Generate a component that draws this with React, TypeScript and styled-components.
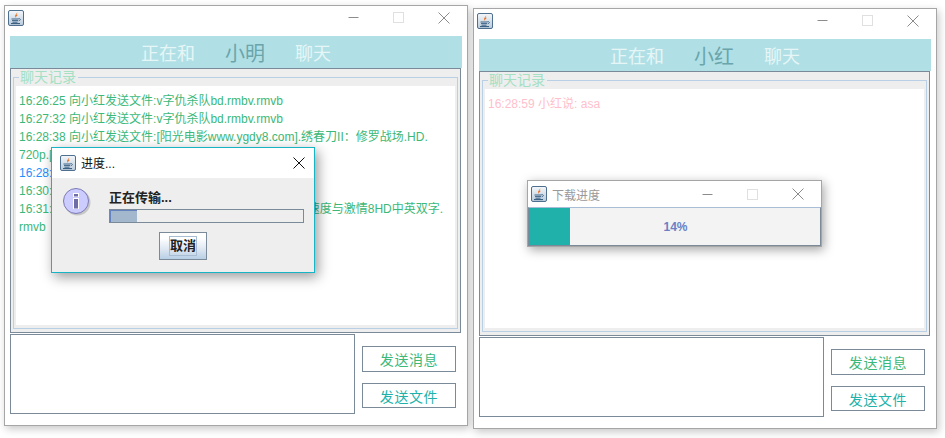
import React from 'react'
import styled, { createGlobalStyle } from 'styled-components'

const borderGrey = '#7a8a99'
const uiFont = '"Liberation Sans", "Noto Sans CJK SC", sans-serif'

const GlobalStyle = createGlobalStyle`
  html, body {
    margin: 0;
    padding: 0;
    background: #ffffff;
    font-family: ${uiFont};
  }
`

const Desktop = styled.div`
  position: relative;
  width: 945px;
  height: 438px;
  overflow: hidden;
  background: #ffffff;
`

const ChatWindow = styled.div<{ $left: number; $top: number }>`
  position: absolute;
  left: ${({ $left }) => $left}px;
  top: ${({ $top }) => $top}px;
  width: 464px;
  height: 421px;
  box-sizing: border-box;
  border: 1px solid #a6a6a6;
  background: #ffffff;
  box-shadow: 2px 3px 8px rgba(0, 0, 0, 0.22);
`

const TitleBar = styled.div<{ $height: number; $bottom?: number; $left?: number }>`
  display: flex;
  align-items: center;
  box-sizing: border-box;
  height: ${({ $height }) => $height}px;
  padding: 0 0 ${({ $bottom }) => $bottom ?? 0}px ${({ $left }) => $left ?? 3}px;
  background: #ffffff;
`

const TitleText = styled.span<{ $color: string }>`
  margin-left: 5px;
  font-size: 12px;
  color: ${({ $color }) => $color};
`

const Controls = styled.div`
  display: flex;
  margin-left: auto;
`

const ControlCell = styled.div<{ $width: number }>`
  display: flex;
  align-items: center;
  justify-content: center;
  width: ${({ $width }) => $width}px;
`

const WindowBody = styled.div`
  padding: 0 5px;
`

const Banner = styled.div`
  display: flex;
  align-items: center;
  justify-content: center;
  gap: 30px;
  height: 32px;
  background: #b0e0e6;
`

const BannerText = styled.span`
  font-size: 18px;
  color: #e6f6f6;
`

const BannerName = styled.span`
  font-size: 20px;
  color: #6aa5ab;
`

const Panel = styled.div`
  box-sizing: border-box;
  width: 451px;
  height: 265px;
  padding: 0 2px 3px 2px;
  border: 1px solid ${borderGrey};
  background: #eeeeee;
`

const Group = styled.fieldset`
  box-sizing: border-box;
  height: 100%;
  min-width: 0;
  margin: 0;
  padding: 0 2px 3px 2px;
  border: 1px solid #b8cfe5;
`

const GroupTitle = styled.legend`
  margin-left: 3px;
  padding: 0 2px 0 1px;
  font-size: 14px;
  line-height: 17px;
  color: #a3e0c4;
`

const Log = styled.div`
  box-sizing: border-box;
  height: 239px;
  padding: 6px 3px;
  background: #ffffff;
`

const LogLine = styled.div<{ $color: string }>`
  height: 18px;
  font-size: 12px;
  line-height: 18px;
  white-space: nowrap;
  color: ${({ $color }) => $color};
`

const BottomRow = styled.div`
  display: flex;
  margin-top: 1px;
`

const MessageInput = styled.div`
  box-sizing: border-box;
  width: 345px;
  height: 80px;
  border: 1px solid ${borderGrey};
  background: #ffffff;
`

const ActionColumn = styled.div`
  display: flex;
  flex-direction: column;
  gap: 11px;
  width: 94px;
  margin-left: 7px;
  padding-top: 12px;
`

const ActionButton = styled.div<{ $color: string; $height: number }>`
  display: flex;
  align-items: center;
  justify-content: center;
  box-sizing: border-box;
  height: ${({ $height }) => $height}px;
  border: 1px solid ${borderGrey};
  font-size: 14px;
  letter-spacing: 0.6px;
  color: ${({ $color }) => $color};
  background: #ffffff;
`

const Dialog = styled.div`
  position: absolute;
  left: 51px;
  top: 147px;
  width: 264px;
  height: 126px;
  box-sizing: border-box;
  border: 1px solid #17b4c6;
  background: #eeeeee;
  box-shadow: 3px 4px 12px rgba(0, 0, 0, 0.4);
`

const DialogBody = styled.div`
  display: flex;
  flex-direction: column;
  padding: 10px 10px 0 11px;
`

const DialogMessage = styled.div`
  display: flex;
  gap: 16px;
`

const MessageColumn = styled.div`
  display: flex;
  flex-direction: column;
  padding-top: 2px;
`

const MessageText = styled.div`
  font-size: 13px;
  font-weight: 700;
  line-height: 16px;
  color: #222222;
`

const TransferBar = styled.div`
  box-sizing: border-box;
  width: 195px;
  height: 14px;
  margin-top: 3px;
  border: 1px solid ${borderGrey};
  background: #eeeeee;
`

const TransferFill = styled.div`
  height: 100%;
  background: #a3b8cc;
  border-top: 1px solid #6382bf;
  border-left: 1px solid #6382bf;
  box-sizing: border-box;
`

const CancelButton = styled.div`
  display: flex;
  align-items: center;
  justify-content: center;
  align-self: center;
  box-sizing: border-box;
  width: 48px;
  height: 28px;
  margin-top: 9px;
  margin-right: 1px;
  border: 1px solid ${borderGrey};
  background: linear-gradient(#ffffff 20%, #dfe8f2 60%, #b8cfe5);
`

const CancelLabel = styled.span`
  box-sizing: border-box;
  width: 28px;
  height: 20px;
  border: 1px solid #a9bdd2;
  font-size: 13px;
  font-weight: 700;
  line-height: 18px;
  text-align: center;
  color: #222222;
`

const DownloadWindow = styled.div`
  position: absolute;
  left: 527px;
  top: 180px;
  width: 295px;
  height: 67px;
  box-sizing: border-box;
  border: 1px solid #a6a6a6;
  background: #ffffff;
  box-shadow: 2px 3px 10px rgba(0, 0, 0, 0.35);
`

const DownloadBar = styled.div`
  position: relative;
  box-sizing: border-box;
  height: 39px;
  border: 1px solid ${borderGrey};
  border-top-color: #a9bdd6;
  background: #f3f3f3;
`

const DownloadFill = styled.div`
  height: 100%;
  background: #20b2aa;
`

const DownloadLabel = styled.span`
  position: absolute;
  inset: 0 0 0 2px;
  display: flex;
  align-items: center;
  justify-content: center;
  font-size: 12px;
  font-weight: 700;
  color: #6a80c4;
`

const JavaIcon: React.FC = () => (
  <svg width="16" height="16" viewBox="0 0 16 16" style={{ flex: 'none' }}>
    <defs>
      <linearGradient id="javaBg" x1="0" y1="0" x2="0" y2="1">
        <stop offset="0" stopColor="#f4f7fa" />
        <stop offset="1" stopColor="#b9cadb" />
      </linearGradient>
    </defs>
    <rect x="0.5" y="0.5" width="15" height="15" rx="1.5" fill="url(#javaBg)" stroke="#4f6f8f" />
    <path d="M9 1.8c.8 1.8-2.6 2.8-1.7 4.9.2.5.5.9.8 1.2-.8-1.5 1.3-2.1 1.7-3.5-.6.4-1 .6-1.4.7.7-.9 1-2.2.6-3.3z" fill="#e8701f" />
    <path d="M3.5 9h7M4 10.6h6M4.5 12.2h5" stroke="#3f6587" strokeWidth="1" fill="none" />
    <path d="M10.5 8.6c2.2-.3 2.6 1.7.2 2.2" stroke="#3f6587" strokeWidth="1" fill="none" />
    <path d="M3 13.6h9" stroke="#2f5577" strokeWidth="1" />
  </svg>
)

const InfoIcon: React.FC = () => (
  <svg width="30" height="30" viewBox="0 0 30 30" style={{ flex: 'none' }}>
    <circle cx="14.5" cy="14.5" r="13" fill="#000000" opacity="0.16" />
    <circle cx="13" cy="13" r="12.5" fill="#ccccff" stroke="#7b7bb5" />
    <rect x="10" y="5" width="6" height="4" fill="#ffffff" />
    <rect x="11" y="6" width="4" height="2.5" fill="#6e6ea6" />
    <rect x="10" y="10" width="6" height="11" fill="#ffffff" />
    <rect x="11" y="11" width="4" height="9.5" fill="#6e6ea6" />
  </svg>
)

const WindowControls: React.FC<{ closeOnly?: boolean }> = ({ closeOnly }) => (
  <Controls>
    {!closeOnly && (
      <>
        <ControlCell $width={45}>
          <svg width="11" height="11" viewBox="0 0 11 11">
            <path d="M0.5 5.5h10" stroke="#8c8c8c" />
          </svg>
        </ControlCell>
        <ControlCell $width={45}>
          <svg width="11" height="11" viewBox="0 0 11 11">
            <rect x="0.5" y="0.5" width="10" height="10" fill="none" stroke="#e0e0e0" />
          </svg>
        </ControlCell>
      </>
    )}
    <ControlCell $width={closeOnly ? 30 : 46}>
      <svg width="12" height="12" viewBox="0 0 12 12">
        <path d="M0.5 0.5l11 11M11.5 0.5l-11 11" stroke={closeOnly ? '#111111' : '#8c8c8c'} fill="none" />
      </svg>
    </ControlCell>
  </Controls>
)

type ChatEntry = { text: string; color: string }

const green = '#3cb878'
const blue = '#1e90ff'
const pink = '#ffc0cb'

const leftLog: ChatEntry[] = [
  { text: '16:26:25 向小红发送文件:v字仇杀队bd.rmbv.rmvb', color: green },
  { text: '16:27:32 向小红发送文件:v字仇杀队bd.rmbv.rmvb', color: green },
  { text: '16:28:38 向小红发送文件:[阳光电影www.ygdy8.com].绣春刀II：修罗战场.HD.', color: green },
  { text: '720p.[中英双字].rmvb', color: green },
  { text: '16:28:59 小红说: asa', color: blue },
  { text: '16:30:12 向小红发送文件:bd.rmvb', color: green },
  { text: '16:31:06 向小红发送文件:[阳光电影www.ygdy8.com]...速度与激情8HD中英双字.', color: green },
  { text: 'rmvb', color: green },
]

const rightLog: ChatEntry[] = [{ text: '16:28:59 小红说: asa', color: pink }]

const ChatFrame: React.FC<{ left: number; top: number; name: string; log: ChatEntry[] }> = ({
  left,
  top,
  name,
  log,
}) => (
  <ChatWindow $left={left} $top={top}>
    <TitleBar $height={30} $bottom={7}>
      <JavaIcon />
      <WindowControls />
    </TitleBar>
    <WindowBody>
      <Banner>
        <BannerText>正在和</BannerText>
        <BannerName>{name}</BannerName>
        <BannerText>聊天</BannerText>
      </Banner>
      <Panel>
        <Group>
          <GroupTitle>聊天记录</GroupTitle>
          <Log>
            {log.map((entry, i) => (
              <LogLine key={i} $color={entry.color}>
                {entry.text}
              </LogLine>
            ))}
          </Log>
        </Group>
      </Panel>
      <BottomRow>
        <MessageInput />
        <ActionColumn>
          <ActionButton $color="#3cb878" $height={26}>发送消息</ActionButton>
          <ActionButton $color="#20b2aa" $height={25}>发送文件</ActionButton>
        </ActionColumn>
      </BottomRow>
    </WindowBody>
  </ChatWindow>
)

const progress = 14

const App: React.FC = () => (
  <Desktop>
    <GlobalStyle />
    <ChatFrame left={4} top={5} name="小明" log={leftLog} />
    <ChatFrame left={473} top={8} name="小红" log={rightLog} />

    <Dialog>
      <TitleBar $height={30} $bottom={1} $left={8}>
        <JavaIcon />
        <TitleText $color="#111111">进度...</TitleText>
        <WindowControls closeOnly />
      </TitleBar>
      <DialogBody>
        <DialogMessage>
          <InfoIcon />
          <MessageColumn>
            <MessageText>正在传输...</MessageText>
            <TransferBar>
              <TransferFill style={{ width: `${progress}%` }} />
            </TransferBar>
          </MessageColumn>
        </DialogMessage>
        <CancelButton>
          <CancelLabel>取消</CancelLabel>
        </CancelButton>
      </DialogBody>
    </Dialog>

    <DownloadWindow>
      <TitleBar $height={26}>
        <JavaIcon />
        <TitleText $color="#999999">下载进度</TitleText>
        <WindowControls />
      </TitleBar>
      <DownloadBar>
        <DownloadFill style={{ width: `${progress}%` }} />
        <DownloadLabel>{progress}%</DownloadLabel>
      </DownloadBar>
    </DownloadWindow>
  </Desktop>
)

export default App
